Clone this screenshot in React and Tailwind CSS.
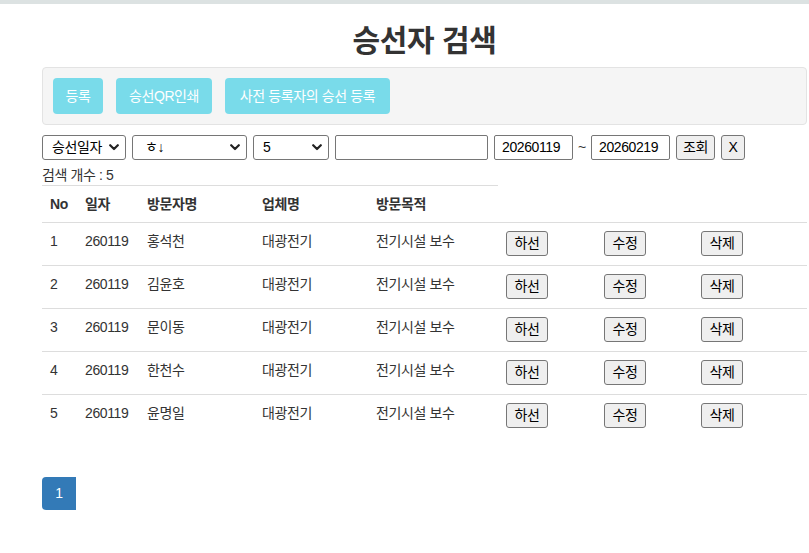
import React from "react";

const rows = [
  ["1", "260119", "홍석천"],
  ["2", "260119", "김윤호"],
  ["3", "260119", "문이동"],
  ["4", "260119", "한천수"],
  ["5", "260119", "윤명일"],
];

function Chevron() {
  return (
    <svg width="10" height="7" viewBox="0 0 10 7" className="shrink-0">
      <path d="M1.2 1.2 L5 5 L8.8 1.2" fill="none" stroke="#222" strokeWidth="2.2" strokeLinecap="round" strokeLinejoin="round" />
    </svg>
  );
}

function FakeSelect({ w, label, textPl }) {
  return (
    <div
      className={`${w} h-[25px] border border-[#767676] rounded-[3px] bg-white flex items-center justify-between pr-[6px] text-[14px] text-black`}
      style={{ paddingLeft: textPl }}
    >
      <span>{label}</span>
      <Chevron />
    </div>
  );
}

function GrayBtn({ children, w }) {
  return (
    <button className={`${w} h-[25px] border border-[#767676] rounded-[3px] bg-[#efefef] text-[14px] text-black flex items-center justify-center`}>
      {children}
    </button>
  );
}

export default function App() {
  return (
    <div
      className="w-[809px] min-h-[553px] bg-white text-[#333] text-[14px] tracking-[-0.4px]"
      style={{ fontFamily: '"Liberation Sans", "Noto Sans CJK KR", sans-serif' }}
    >
      <div className="h-[4px] bg-[#dce2e2]" />
      <div className="ml-[42px] w-[765px] flex flex-col">
        <h1 className="mt-[20px] text-center text-[30px] leading-[33px] font-bold text-[#333]">승선자 검색</h1>
        <div className="mt-[10px] border border-[#e3e3e3] bg-[#f5f5f5] rounded-[4px] p-[10px] flex gap-[13px]">
          <button className="h-[36px] w-[50px] rounded-[4px] bg-[#79dbea] text-white text-[14px] flex items-center justify-center">등록</button>
          <button className="h-[36px] w-[96px] rounded-[4px] bg-[#79dbea] text-white text-[14px] flex items-center justify-center">승선QR인쇄</button>
          <button className="h-[36px] w-[165px] rounded-[4px] bg-[#79dbea] text-white text-[14px] flex items-center justify-center">사전 등록자의 승선 등록</button>
        </div>
        <div className="mt-[10px] flex items-center h-[25px]">
          <FakeSelect w="w-[84px]" label="승선일자" textPl="9px" />
          <div className="w-[6px]" />
          <FakeSelect w="w-[115px]" label="ㅎ↓" textPl="12px" />
          <div className="w-[6px]" />
          <FakeSelect w="w-[76px]" label="5" textPl="9px" />
          <div className="w-[6px]" />
          <div className="w-[153px] h-[25px] border border-[#767676] rounded-[2px] bg-white" />
          <div className="w-[6px]" />
          <div className="w-[79px] h-[25px] border border-[#767676] rounded-[2px] bg-white flex items-center pl-[7px] text-[14px] text-black">20260119</div>
          <span className="w-[18px] text-center text-[14px] text-[#333]">~</span>
          <div className="w-[79px] h-[25px] border border-[#767676] rounded-[2px] bg-white flex items-center pl-[7px] text-[14px] text-black">20260219</div>
          <div className="w-[6px]" />
          <GrayBtn w="w-[39px]">조회</GrayBtn>
          <div className="w-[6px]" />
          <GrayBtn w="w-[24px]">X</GrayBtn>
        </div>
        <div className="mt-[5px] leading-[20px]">검색 개수 : 5</div>
        <table className="table-fixed border-collapse w-[765px]">
          <colgroup>
            <col className="w-[35px]" />
            <col className="w-[62px]" />
            <col className="w-[115px]" />
            <col className="w-[114px]" />
            <col className="w-[130px]" />
            <col className="w-[98px]" />
            <col className="w-[97px]" />
            <col className="w-[114px]" />
          </colgroup>
          <thead>
            <tr>
              {["No", "일자", "방문자명", "업체명", "방문목적"].map((h) => (
                <th key={h} className="border-t border-[#ddd] text-left font-bold px-[8px] py-[8px] leading-[20px] text-[#333]">
                  {h}
                </th>
              ))}
            </tr>
          </thead>
          <tbody>
            {rows.map((r) => (
              <tr key={r[0]} className="h-[43px]">
                <td className="border-t border-[#ddd] align-top px-[8px] pt-[8px] leading-[20px]">{r[0]}</td>
                <td className="border-t border-[#ddd] align-top px-[8px] pt-[8px] leading-[20px]">{r[1]}</td>
                <td className="border-t border-[#ddd] align-top px-[8px] pt-[8px] leading-[20px]">{r[2]}</td>
                <td className="border-t border-[#ddd] align-top px-[8px] pt-[8px] leading-[20px]">대광전기</td>
                <td className="border-t border-[#ddd] align-top px-[8px] pt-[8px] leading-[20px]">전기시설 보수</td>
                <td className="border-t border-[#ddd] align-top px-[8px] pt-[8px]">
                  <GrayBtn w="w-[42px]">하선</GrayBtn>
                </td>
                <td className="border-t border-[#ddd] align-top px-[8px] pt-[8px]">
                  <GrayBtn w="w-[42px]">수정</GrayBtn>
                </td>
                <td className="border-t border-[#ddd] align-top px-[8px] pt-[8px]">
                  <GrayBtn w="w-[42px]">삭제</GrayBtn>
                </td>
              </tr>
            ))}
          </tbody>
        </table>
        <div className="mt-[39px] flex">
          <div className="w-[34px] h-[33px] bg-[#337ab7] rounded-l-[4px] text-white text-[14px] flex items-center justify-center">1</div>
        </div>
      </div>
    </div>
  );
}
